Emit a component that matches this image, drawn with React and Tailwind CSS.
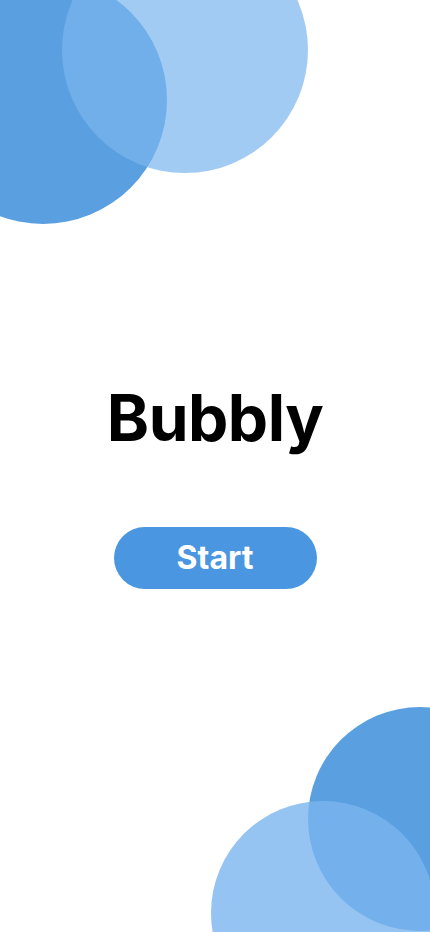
export default function App() {
  return (
    <div
      className="relative w-full h-[932px] overflow-hidden bg-white"
      style={{ fontFamily: 'Inter, "Liberation Sans", sans-serif' }}
    >
      {/* decorative bubbles */}
      <div className="absolute left-[-81px] top-[-24px] w-[248px] h-[248px] rounded-full bg-[#5aa0e1]" />
      <div className="absolute left-[62px] top-[-73px] w-[246px] h-[246px] rounded-full bg-[#7ab5ef]/70" />
      <div className="absolute left-[308px] top-[707px] w-[224px] h-[224px] rounded-full bg-[#5aa0e1]" />
      <div className="absolute left-[211px] top-[801px] w-[224px] h-[224px] rounded-full bg-[#7ab5ef]/80" />

      <main className="relative flex flex-col items-center pt-[386px]">
        <h1 className="text-[64px] leading-[64px] font-bold text-black tracking-[-0.5px]">Bubbly</h1>
        <button className="mt-[77px] w-[203px] h-[62px] rounded-full bg-[#4a96e0] text-white text-[32px] font-bold">
          Start
        </button>
      </main>
    </div>
  );
}
